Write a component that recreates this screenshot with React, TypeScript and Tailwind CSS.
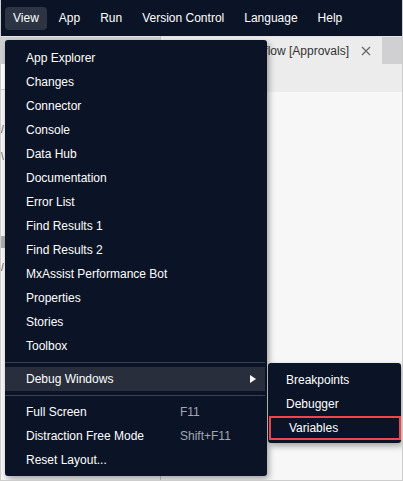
import clsx from "clsx";

const topMenu = ["View", "App", "Run", "Version Control", "Language", "Help"];

const viewItems = [
  "App Explorer",
  "Changes",
  "Connector",
  "Console",
  "Data Hub",
  "Documentation",
  "Error List",
  "Find Results 1",
  "Find Results 2",
  "MxAssist Performance Bot",
  "Properties",
  "Stories",
  "Toolbox",
];

const bottomItems = [
  { label: "Full Screen", shortcut: "F11" },
  { label: "Distraction Free Mode", shortcut: "Shift+F11" },
  { label: "Reset Layout...", shortcut: "" },
];

const debugItems = ["Breakpoints", "Debugger", "Variables"];

const MenuRow = ({ label, shortcut }: { label: string; shortcut?: string }) => (
  <div className="flex h-[24px] items-center pl-[21px]">
    <span className="w-[154px] text-white">{label}</span>
    {shortcut && <span className="text-[#a3a8b2]">{shortcut}</span>}
  </div>
);

const App = () => {
  return (
    <div
      className="relative h-[481px] w-[403px] overflow-hidden bg-[#f7f7f7] text-[12px]"
      style={{ fontFamily: '"Liberation Sans", Arial, sans-serif' }}
    >
      {/* top menu bar */}
      <div className="flex h-[36px] items-center gap-1 bg-[#0b1426] pl-[5px]">
        {topMenu.map((m) => (
          <div
            key={m}
            className={clsx(
              "flex h-[23px] items-center rounded-[4px] px-2 text-white",
              m === "View" && "bg-[#2d3444]"
            )}
          >
            {m}
          </div>
        ))}
      </div>

      {/* workspace behind the menu */}
      <div className="flex h-[445px]">
        <div className="flex w-[161px] flex-col border-r border-[#c6c6c6]">
          <div className="h-[28px] border-t border-[#e4e4e4] bg-[#d0d0d2]" />
          <div className="h-[26px] border-b border-[#cfcfcf] bg-white" />
          <div className="flex flex-1 flex-col gap-3 bg-[#f7f7f7] pt-8 pl-[1px] text-[10px] text-[#555]">
            <span>/</span>
            <span>\</span>
            <div className="mt-[60px] h-[12px] w-[4px] bg-[#b0b0b0]" />
            <span>/</span>
          </div>
        </div>
        <div className="flex flex-1 flex-col">
          <div className="flex h-[28px] border-t border-[#e4e4e4]">
            <div className="flex w-[221px] items-center justify-end gap-[12px] bg-[#ececec] pr-[11px] text-[#333]">
              <span>flow [Approvals]</span>
              <svg width="10" height="10" viewBox="0 0 10 10" className="text-[#666]">
                <path d="M1 1L9 9M9 1L1 9" stroke="currentColor" strokeWidth="1.2" />
              </svg>
            </div>
            <div className="flex-1 bg-[#d0d0d2]" />
          </div>
          <div className="h-[28px] bg-[#ececec]" />
          <div className="flex-1 bg-[#f7f7f7]" />
        </div>
      </div>

      {/* View dropdown */}
      <div className="absolute left-[5px] top-[40px] w-[262px] rounded-[3px] bg-[#0b1426] pt-[6px] pb-[4px] shadow-[2px_3px_6px_rgba(0,0,0,0.35)]">
        {viewItems.map((i) => (
          <MenuRow key={i} label={i} />
        ))}
        <div className="my-[4px] mr-[2px] h-px bg-[#3a4150]" />
        <div className="mr-[2px] flex h-[24px] items-center bg-[#282e3c] pl-[21px] pr-[9px]">
          <span className="flex-1 text-white">Debug Windows</span>
          <svg width="6" height="8" viewBox="0 0 6 8">
            <path d="M0 0L6 4L0 8Z" fill="white" />
          </svg>
        </div>
        <div className="my-[4px] mr-[2px] h-px bg-[#3a4150]" />
        {bottomItems.map((i) => (
          <MenuRow key={i.label} label={i.label} shortcut={i.shortcut} />
        ))}
      </div>

      {/* Debug Windows submenu */}
      <div className="absolute left-[268px] top-[363px] w-[133px] rounded-[3px] bg-[#0b1426] pt-[5px] pb-[3px] shadow-[2px_3px_6px_rgba(0,0,0,0.35)]">
        {debugItems.map((i) => (
          <div
            key={i}
            className={clsx(
              "flex h-[24px] items-center pl-[18px] text-white",
              i === "Variables" && "ml-px border-2 border-[#f2454b] pl-[14px]"
            )}
          >
            {i}
          </div>
        ))}
      </div>

      {/* screenshot frame */}
      <div className="pointer-events-none absolute inset-0 border-x border-b border-[#cdcdcd]" />
    </div>
  );
};

export default App;
